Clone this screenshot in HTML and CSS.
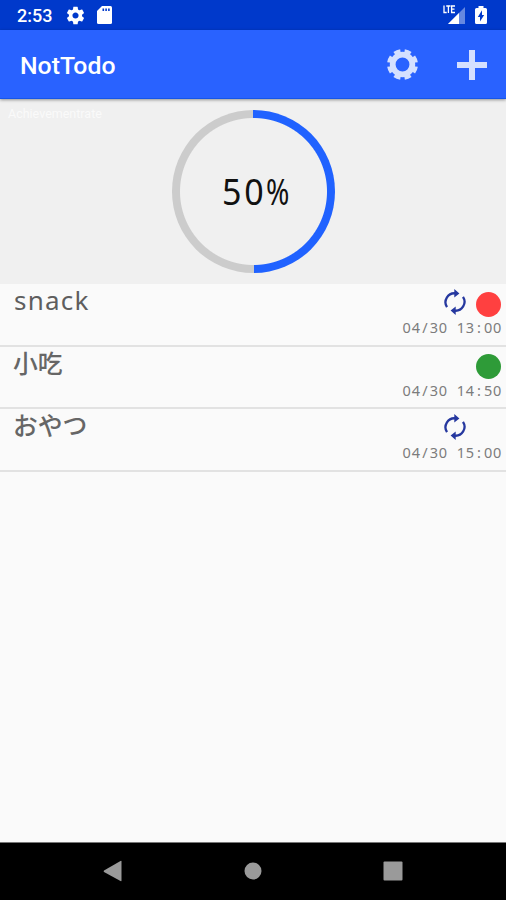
FILE: index.html
```html
<!DOCTYPE html>
<html lang="en">
<head>
<meta charset="utf-8">
<title>NotTodo</title>
<link rel="stylesheet" href="styles.css">
</head>
<body>
<svg class="defs" aria-hidden="true">
  <symbol id="gear" viewBox="0 0 24 24"><path d="M19.43 12.98c.04-.32.07-.64.07-.98s-.03-.66-.07-.98l2.11-1.65c.19-.15.24-.42.12-.64l-2-3.46c-.12-.22-.39-.3-.61-.22l-2.49 1c-.52-.4-1.08-.73-1.69-.98l-.38-2.65A.49.49 0 0 0 14 2h-4c-.25 0-.46.18-.49.42l-.38 2.65c-.61.25-1.17.59-1.69.98l-2.49-1c-.23-.09-.49 0-.61.22l-2 3.46c-.13.22-.07.49.12.64l2.11 1.65c-.04.32-.07.65-.07.98s.03.66.07.98l-2.11 1.65c-.19.15-.24.42-.12.64l2 3.46c.12.22.39.3.61.22l2.49-1c.52.4 1.08.73 1.69.98l.38 2.65c.03.24.24.42.49.42h4c.25 0 .46-.18.49-.42l.38-2.65c.61-.25 1.17-.59 1.69-.98l2.49 1c.23.09.49 0 .61-.22l2-3.46c.12-.22.07-.49-.12-.64l-2.11-1.65zM12 15.500c-1.930 0-3.500-1.570-3.500-3.500s1.570-3.500 3.500-3.500 3.500 1.570 3.500 3.500-1.570 3.500-3.500 3.500z"/></symbol>
  <symbol id="repeat" viewBox="0 0 22 26"><g fill="none" stroke="currentColor" stroke-width="2.3"><path d="M3 18.2A9 9 0 0 1 11.5 4.3"/><path d="M19 7.8A9 9 0 0 1 10.5 21.7"/></g><path fill="currentColor" d="M10.3 0L15.4 4.4L10.3 8.6zM11.7 17.4L6.6 21.6L11.7 26z"/></symbol>
</svg>
<div class="status">
  <span class="clock">2:53</span>
  <svg class="status-gear"><use href="#gear"/></svg>
  <svg class="sd" viewBox="0 0 15 18"><path d="M5 0H13.5Q15 0 15 1.5V16.5Q15 18 13.5 18H1.5Q0 18 0 16.5V5z"/><path class="slots" d="M5.5 2.5h1.6v2.6H5.5zM8.300 2.500h1.600v2.600H8.300zM11.100 2.500h1.600v2.600h-1.600z"/></svg>
  <svg class="signal" viewBox="0 0 23 20"><path d="M22 2V19H5z" opacity=".4"/><path d="M16 8V19H5z"/><path d="M1 .5V7.500H3.700M3.200 1H7.500M5.400 1V8M12 1H8.600V7.500H12M8.600 4.200H11.500" fill="none" stroke="#fff" stroke-width="1.300"/></svg>
  <svg class="battery" viewBox="0 0 12 18"><path d="M3.500 0h5v2H10.500Q12 2 12 3.500V16.500Q12 18 10.500 18H1.500Q0 18 0 16.500V3.500Q0 2 1.500 2h2z"/><path class="slots" d="M7 4.200V9H9.200L5 15.500V11H2.800z"/></svg>
</div>
<header class="bar">
  <h1>NotTodo</h1>
  <svg class="settings" viewBox="-15 -15 30 30"><circle r="9.500" fill="none" stroke="currentColor" stroke-width="5.600"/><circle r="12.800" fill="none" stroke="currentColor" stroke-width="4.400" pathLength="80" stroke-dasharray="6 4" stroke-dashoffset="-2"/></svg>
  <svg class="plus" viewBox="0 0 30 30"><path d="M12 0h6v12h12v6H18v12h-6V18H0v-6h12z"/></svg>
</header>
<section class="summary">
  <span class="label">Achievementrate</span>
  <div class="ring"><span class="percent"><span class="digits">50</span><span class="sign">%</span></span></div>
</section>
<ul class="list">
  <li><span class="name latin">snack</span><div class="info"><div class="marks"><svg class="repeat"><use href="#repeat"/></svg><i class="dot red"></i></div><time>04<b>/</b>30 13<b>:</b>00</time></div></li>
  <li><span class="name">小吃</span><div class="info"><div class="marks"><i class="dot green"></i></div><time>04<b>/</b>30 14<b>:</b>50</time></div></li>
  <li><span class="name">おやつ</span><div class="info"><div class="marks"><svg class="repeat"><use href="#repeat"/></svg><i class="dot"></i></div><time>04<b>/</b>30 15<b>:</b>00</time></div></li>
</ul>
<nav class="nav">
  <svg viewBox="0 0 22 22"><path d="M19.500 1.500V20.500Q19.500 21.500 18.500 21L2 12Q1.200 11.300 2 10.600L18.500 1Q19.500.5 19.500 1.500z"/></svg>
  <svg viewBox="0 0 22 22"><circle cx="11" cy="11" r="8.500"/></svg>
  <svg viewBox="0 0 22 22"><rect x="1.500" y="1.500" width="19" height="19" rx="1"/></svg>
</nav>
</body>
</html>
```
FILE: styles.css
```css
* { box-sizing: border-box; }
body {
  margin: 0;
  height: 900px;
  display: flex;
  flex-direction: column;
  overflow: hidden;
  background: #fafafa;
  font-family: "Noto Sans", "Noto Sans CJK JP", sans-serif;
}
svg { display: block; flex: none; }
.defs { position: absolute; width: 0; height: 0; }
.status {
  flex: none;
  height: 30px;
  display: flex;
  align-items: center;
  padding: 0 19px 0 17px;
  background: #0039cb;
  color: #fff;
  fill: #fff;
}
.clock { width: 48px; font: 500 18px/30px Roboto, sans-serif; padding-top: 2px; }
.status-gear { width: 21px; height: 21px; }
.sd { width: 15px; height: 18px; margin-left: 11px; }
.slots { fill: #0039cb; }
.signal { width: 23px; height: 20px; margin-left: auto; }
.battery { width: 12px; height: 18px; margin-left: 9px; }
.bar {
  flex: none;
  height: 69px;
  display: flex;
  align-items: center;
  padding: 0 19px 0 20px;
  background: #2962ff;
  border-bottom: 1px solid #1656e8;
  box-shadow: 0 1px 3px rgba(0, 0, 0, .4);
  color: #d4e0ff;
  fill: #d4e0ff;
  z-index: 1;
}
h1 { margin: 4px auto 0 0; color: #fff; font: 500 24.800px/30px Roboto, sans-serif; }
.settings { width: 31px; height: 31px; margin: 1px 39px 0 0; }
.plus { width: 30px; height: 30px; margin-top: 1px; }
.summary {
  flex: none;
  position: relative;
  height: 185px;
  padding-top: 11px;
  background: #f0f0f0;
}
.label {
  position: absolute;
  left: 8px;
  top: 7px;
  color: #fafafa;
  font: 12.500px/15px Roboto, sans-serif;
}
.ring {
  width: 163px;
  height: 163px;
  margin: 0 auto;
  display: flex;
  align-items: center;
  justify-content: center;
  border-radius: 50%;
  background: radial-gradient(circle, #f0f0f0 73px, transparent 74px), conic-gradient(#2062ff 50%, #ccc 0);
}
.percent {
  display: flex;
  width: 67px;
  margin: -2px 0 0 5px;
  color: #111;
  font-size: 37px;
  line-height: 50px;
}
.digits { flex: none; width: 44px; letter-spacing: 3px; transform: scaleX(.92); transform-origin: left; }
.sign { transform: scaleX(.76); transform-origin: left; }
.list { flex: 1; margin: 0; padding: 0; list-style: none; }
.list li {
  display: flex;
  justify-content: space-between;
  height: 62.600px;
  padding: 0 5px 0 14px;
  border-bottom: 2px solid #e2e2e2;
}
.name {
  margin: -2px 0 0 -1px;
  color: #666;
  font: 500 24.800px/34px "Noto Sans CJK JP", sans-serif;
}
.latin { margin: -1px 0 0; color: #5e5e5e; font: 400 26px/34px "Noto Sans", sans-serif; letter-spacing: 1.200px; }
.info { padding-top: 5px; }
.marks { height: 29px; display: flex; justify-content: flex-end; align-items: center; }
.repeat { width: 22px; height: 26px; margin: -3px 10px 0 0; color: #26389f; }
.dot { width: 25px; height: 25px; margin-top: 1px; border-radius: 50%; }
.red { background: #ff4040; }
.green { background: #2e9b38; }
time {
  display: block;
  margin: -1px -1px 0 0;
  color: #7c7c7c;
  font-size: 14.500px;
  line-height: 20px;
  letter-spacing: .750px;
  word-spacing: 4.500px;
}
time b { display: inline-block; width: 9px; font-weight: 400; text-align: center; }
.nav {
  flex: none;
  height: 58px;
  display: flex;
  align-items: center;
  justify-content: center;
  gap: 118px;
  padding-bottom: 2px;
  background: #000;
  border-top: 1px solid #777;
}
.nav svg { width: 22px; height: 22px; fill: #9a9a9a; }
```
